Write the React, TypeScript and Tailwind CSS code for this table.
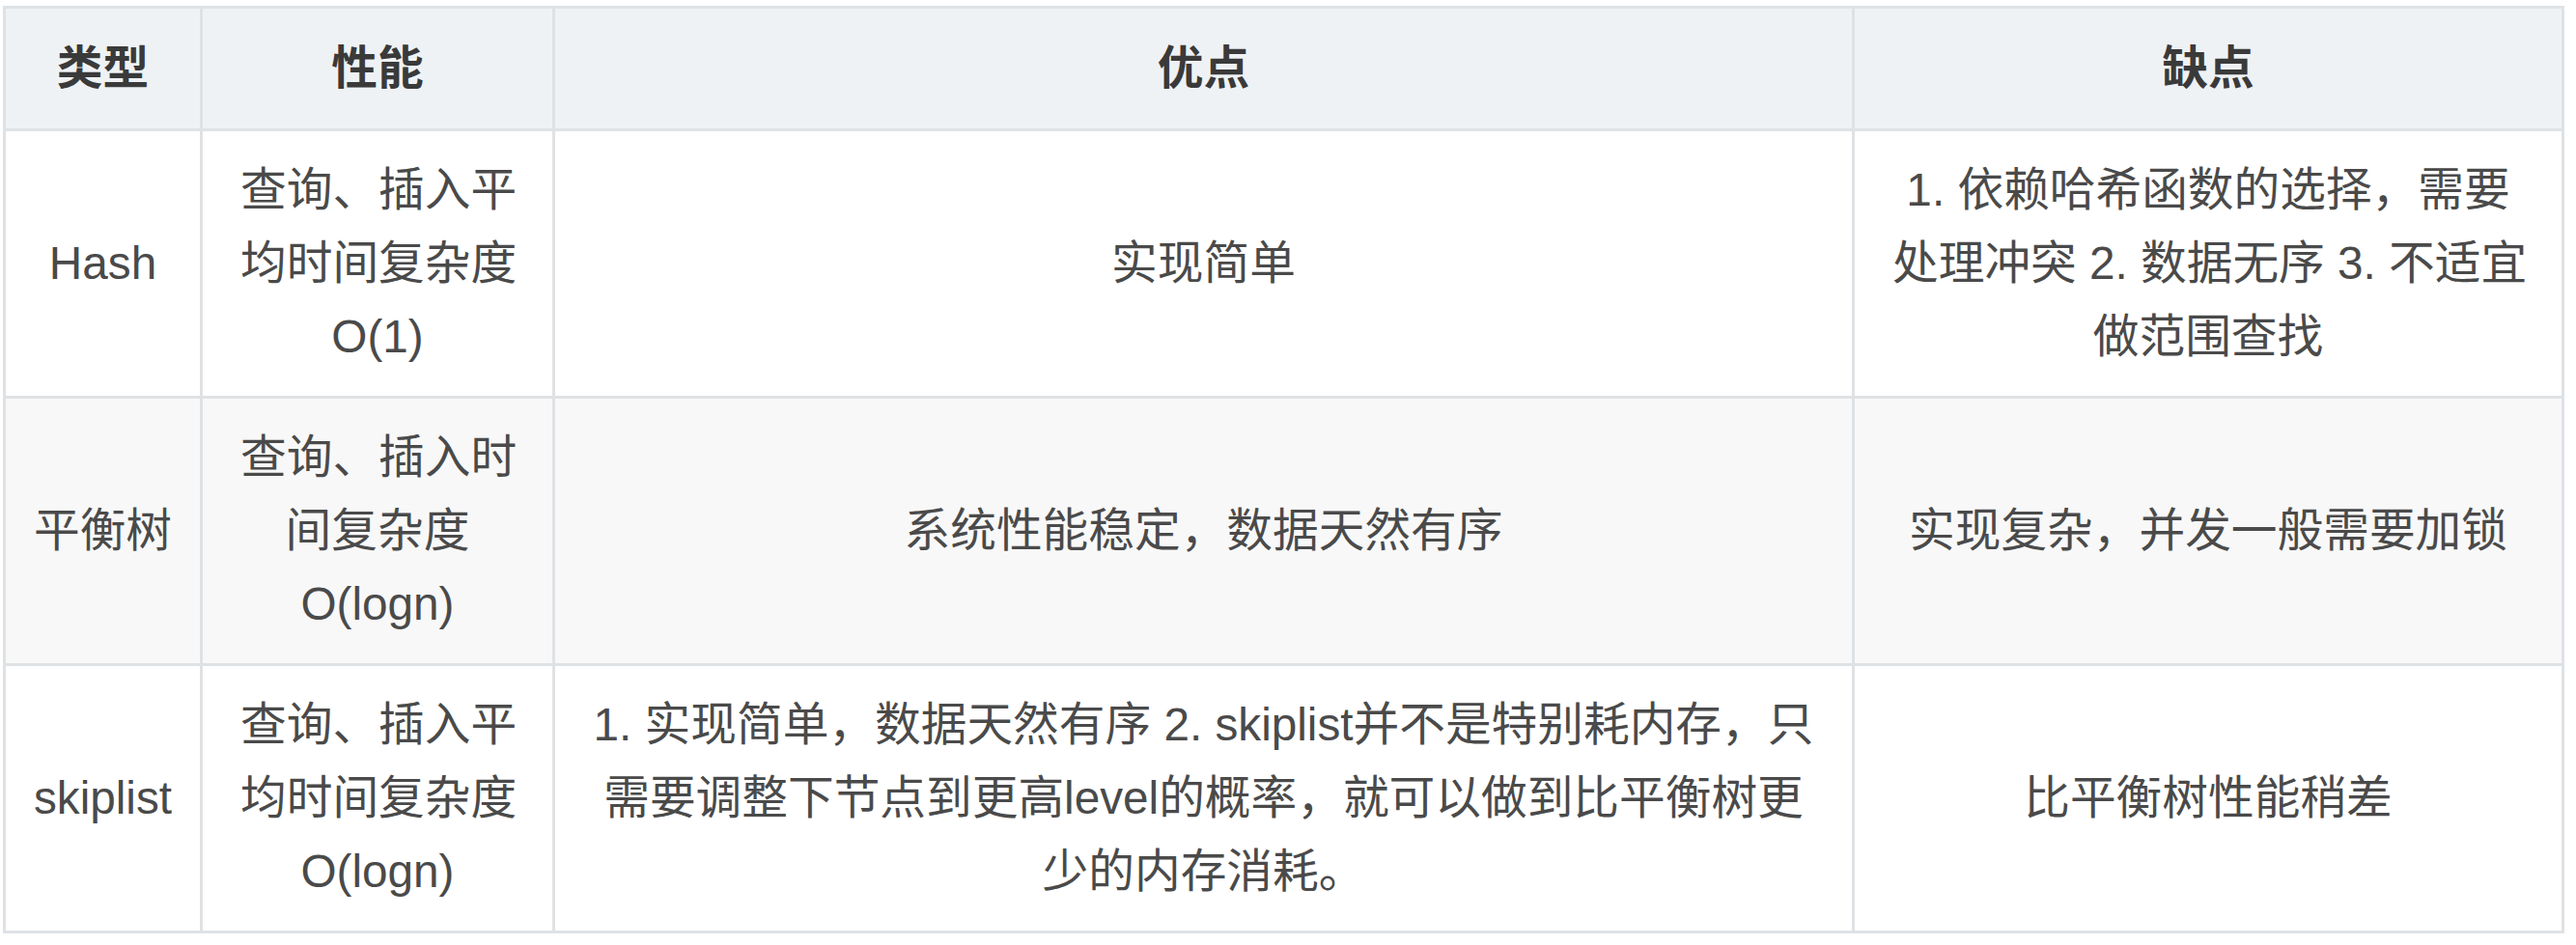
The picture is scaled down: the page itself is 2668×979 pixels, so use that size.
const font = {
  fontFamily: '"Liberation Sans", "Noto Sans CJK SC", sans-serif',
};

type Row = {
  type: string;
  perf: string[];
  pros: string[];
  cons: string[];
};

const rows: Row[] = [
  {
    type: "Hash",
    perf: ["查询、插入平", "均时间复杂度", "O(1)"],
    pros: ["实现简单"],
    cons: ["1. 依赖哈希函数的选择，需要", "处理冲突 2. 数据无序 3. 不适宜", "做范围查找"],
  },
  {
    type: "平衡树",
    perf: ["查询、插入时", "间复杂度", "O(logn)"],
    pros: ["系统性能稳定，数据天然有序"],
    cons: ["实现复杂，并发一般需要加锁"],
  },
  {
    type: "skiplist",
    perf: ["查询、插入平", "均时间复杂度", "O(logn)"],
    pros: [
      "1. 实现简单，数据天然有序 2. skiplist并不是特别耗内存，只",
      "需要调整下节点到更高level的概率，就可以做到比平衡树更",
      "少的内存消耗。",
    ],
    cons: ["比平衡树性能稍差"],
  },
];

function Lines({ lines }: { lines: string[] }) {
  return (
    <>
      {lines.map((l, i) => (
        <span key={i} className="block whitespace-nowrap">
          {l}
        </span>
      ))}
    </>
  );
}

const cell = "border-[3px] border-[#dfe2e5] px-[39px] py-[23px] text-center align-middle";
const first = "border-[3px] border-[#dfe2e5] px-[8px] py-[23px] text-center align-middle whitespace-nowrap";

export default function App() {
  return (
    <div className="min-h-screen bg-white pt-[6px] pl-[3px]" style={font}>
      <table className="table-fixed border-collapse w-[2652px] text-[47.7px] leading-[76px] text-[#4a4a4a]">
        <colgroup>
          <col className="w-[204px]" />
          <col className="w-[365px]" />
          <col className="w-[1346px]" />
          <col className="w-[735px]" />
        </colgroup>
        <thead>
          <tr className="bg-[#eff2f5]">
            <th className={`${first} py-[24px] font-bold text-[#3a3a3a]`}>类型</th>
            <th className={`${cell} py-[24px] font-bold text-[#3a3a3a]`}>性能</th>
            <th className={`${cell} py-[24px] font-bold text-[#3a3a3a]`}>优点</th>
            <th className={`${cell} py-[24px] font-bold text-[#3a3a3a]`}>缺点</th>
          </tr>
        </thead>
        <tbody>
          {rows.map((r, i) => (
            <tr key={r.type} className={i % 2 === 1 ? "bg-[#f8f8f8]" : "bg-white"}>
              <td className={first}>{r.type}</td>
              <td className={cell}>
                <Lines lines={r.perf} />
              </td>
              <td className={cell}>
                <Lines lines={r.pros} />
              </td>
              <td className={cell}>
                <Lines lines={r.cons} />
              </td>
            </tr>
          ))}
        </tbody>
      </table>
    </div>
  );
}
